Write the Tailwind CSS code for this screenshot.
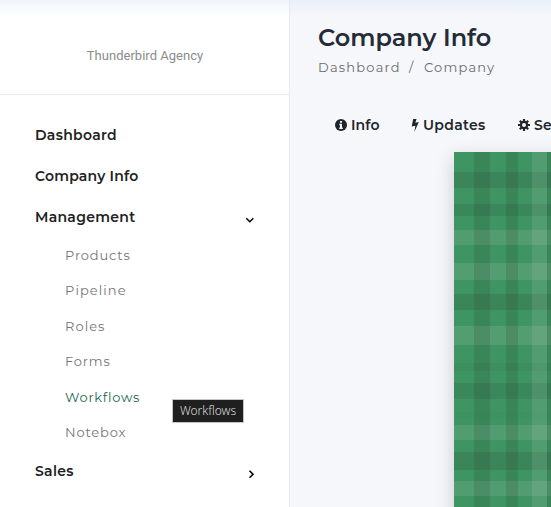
<!DOCTYPE html>
<html lang="en">
<head>
<meta charset="utf-8">
<title>Company Info</title>
<script src="https://cdn.jsdelivr.net/npm/@tailwindcss/browser@4"></script>
</head>
<body class="w-[551px] h-[507px] overflow-hidden bg-[#f5f7fb] font-[Montserrat,Inter,sans-serif] text-[#212529]">
<div class="relative flex h-[507px] w-[551px] overflow-hidden">
  <aside class="w-[290px] h-full shrink-0 border-r border-[#e9ebed] bg-white">
    <div class="flex h-[95px] items-center justify-center border-b border-[#e4eeee] pt-[17px] pl-px">
      <span class="font-[Roboto,sans-serif] text-[13px] leading-4 font-normal text-[#8c8c8c] tracking-[0.02px]">Thunderbird Agency</span>
    </div>
    <nav class="pt-5 text-[14px] font-semibold text-[#212121]">
      <a class="flex h-[41px] items-center pl-[35px] tracking-[0.3px]">Dashboard</a>
      <a class="flex h-[41px] items-center pl-[35px] tracking-[0.2px]">Company Info</a>
      <a class="flex h-[41px] items-center justify-between pl-[35px] pr-[34px] tracking-[0.3px]">Management
        <svg class="mt-1.5 h-[7px] w-[10px]" viewBox="0 0 10 7" fill="none" stroke="#000" stroke-width="1.5"><path d="M1.3 1.3 4.8 4.8 8.3 1.3"/></svg></a>
      <div class="text-[13px] font-normal text-[#757575] tracking-[0.85px]">
        <a class="flex h-[35.4px] items-center pl-[65px]">Products</a>
        <a class="flex h-[35.4px] items-center pl-[65px] tracking-[1.05px]">Pipeline</a>
        <a class="flex h-[35.4px] items-center pl-[65px] tracking-[1.05px]">Roles</a>
        <a class="flex h-[35.4px] items-center pl-[65px]">Forms</a>
        <a class="flex h-[35.4px] items-center pl-[65px] text-[#20694f] tracking-[0.75px]">Workflows</a>
        <a class="flex h-[35.4px] items-center pl-[65px]">Notebox</a>
      </div>
      <a class="flex h-[41px] items-center justify-between pl-[35px] pr-[34px] pt-0.5 tracking-[0.3px]">Sales
        <svg class="mt-1 h-[10px] w-[7px]" viewBox="0 0 7 10" fill="none" stroke="#000" stroke-width="1.6"><path d="M1.5 1.8 5 5.3 1.5 8.8"/></svg></a>
    </nav>
  </aside>
  <main class="w-[261px] shrink-0">
    <header class="pl-7 pt-[22px]">
      <h1 class="h-8 text-[24px] leading-8 font-semibold text-[#252b36] whitespace-nowrap">Company Info</h1>
      <div class="flex h-5 mt-[3px] text-[13px] leading-5 text-[#6c6c6c] tracking-[1.2px]"><span class="w-[91px] shrink-0">Dashboard</span><span class="w-[15px] shrink-0">/</span><span>Company</span></div>
    </header>
    <div class="mt-[38px] flex h-5 items-center pl-[45px] text-[14px] font-semibold tracking-[0.1px] whitespace-nowrap">
      <div class="flex w-[76px] shrink-0 items-center gap-1">
        <svg class="h-3 w-3" viewBox="0 0 12 12"><circle cx="6" cy="6" r="6" fill="#212529"/><path fill="#f5f7fb" d="M5 2h2v1.7H5zM4.3 4.8H7v3.7h.8V10H4.2V8.5H5V6.2h-.7z"/></svg>
        <span>Info</span>
      </div>
      <div class="flex w-[107px] shrink-0 items-center gap-1">
        <svg class="h-[13px] w-2" viewBox="0 0 8 13"><path fill="#212529" d="M2.2 0h3.4L4.3 3.8 7.8 3 3.3 13l1.1-6.2-3.7.8z"/></svg>
        <span class="tracking-[0.3px]">Updates</span>
      </div>
      <div class="flex shrink-0 items-center gap-1">
        <svg class="h-3 w-3" viewBox="0 0 12 12"><g stroke="#212529" stroke-width="2.2"><path d="M6 0v12M0 6h12M1.8 1.8l8.4 8.4M10.2 1.8l-8.4 8.4"/></g><circle cx="6" cy="6" r="4.2" fill="#212529"/><circle cx="6" cy="6" r="2" fill="#f5f7fb"/></svg>
        <span>Settings</span>
      </div>
    </div>
    <div class="mt-[17px] ml-[164px] h-[400px] w-[400px] shadow-[0_6px_18px_rgba(30,30,50,0.2)]">
      <svg class="block h-[400px] w-[400px]" viewBox="0 0 400 400" shape-rendering="crispEdges">
        <path fill="#3e9462" d="M0 0h400v400H0z"/>
        <g fill="#222">
          <path fill-opacity=".12" d="M0 20h400v16H0zM0 142h400v16H0zM0 300h400v18H0z"/>
          <path fill-opacity=".1" d="M0 52h400v12H0zM0 231h400v16H0z"/>
          <path fill-opacity=".05" d="M0 211h400v8H0z"/>
          <path fill-opacity=".02" d="M0 260h400v7H0z"/>
        </g>
        <g fill="#ddd">
          <path fill-opacity=".12" d="M0 78h400v15H0zM0 273h400v15H0zM0 329h400v15H0z"/>
          <path fill-opacity=".13" d="M0 111h400v17H0zM0 174h400v19H0z"/>
        </g>
        <path fill="#222" fill-opacity=".12" d="M20 0h16v400H20zM52 0h12v400H52zM93 0h16v400H93z"/>
        <path fill="#ddd" fill-opacity=".12" d="M78 0h15v400H78z"/>
      </svg>
    </div>
  </main>
  <div class="pointer-events-none absolute inset-x-0 top-0 h-[17px] bg-linear-to-b from-[#dfeaf6]/50 to-transparent"></div>
  <div class="absolute left-[172px] top-[399px] flex h-6 w-[72px] items-center justify-center border border-[#c4c4c4] bg-[#1f1f1f] font-['Noto_Sans',sans-serif] text-[12px] font-light text-[#ddd]">Workflows</div>
</div>
</body>
</html>
